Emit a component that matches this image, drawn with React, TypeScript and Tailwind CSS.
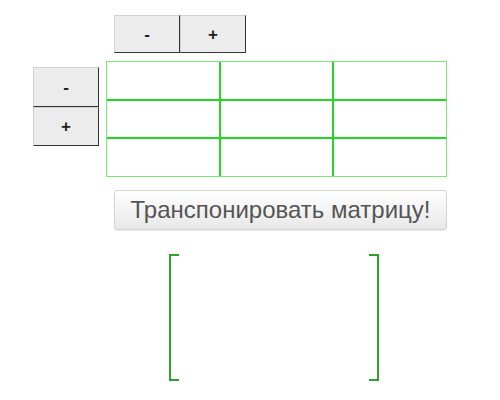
import React from "react";

const btn =
  "w-[66px] h-[38px] bg-[#ececec] border border-t-[#d0d0d0] border-l-[#d0d0d0] border-r-[#333] border-b-[#333] text-[#222] font-bold text-[17px] flex items-center justify-center leading-none";

const cellCls = (r: number, c: number) => {
  const parts = ["w-[113px] h-[38px] p-0 border-[#22d822]"];
  if (c > 0) parts.push("border-l");
  if (c < 2) parts.push("border-r");
  if (r > 0) parts.push("border-t");
  if (r < 2) parts.push("border-b");
  return parts.join(" ");
};

export default function App() {
  const rows = [0, 1, 2];
  const cols = [0, 1, 2];
  return (
    <div className="w-[500px] h-[400px] bg-white overflow-hidden" style={{ fontFamily: '"Liberation Sans", Arial, sans-serif' }}>
      <div className="flex ml-[114px] pt-[15px]">
        <button className={btn}>-</button>
        <button className={btn}>+</button>
      </div>

      <div className="flex items-start mt-[8px] ml-[33px] gap-[7px]">
        <div className="flex flex-col mt-[6px]">
          <button className={btn + " h-[40px]"}>-</button>
          <button className={btn + " h-[39px]"}>+</button>
        </div>
        <table className="border border-[#7be87b] border-separate border-spacing-0">
          <tbody>
            {rows.map((r) => (
              <tr key={r}>
                {cols.map((c) => (
                  <td key={c} className={cellCls(r, c)} />
                ))}
              </tr>
            ))}
          </tbody>
        </table>
      </div>

      <button className="ml-[114px] mt-[13px] w-[333px] h-[40px] rounded-[3px] border border-[#d4d4d4] bg-gradient-to-b from-white to-[#e8e8e8] text-[#555] text-[24px] flex items-center justify-center shadow-[0_1px_1px_rgba(0,0,0,0.08)]">
        Транспонировать матрицу!
      </button>

      <div className="flex ml-[169px] mt-[24px]">
        <div className="w-[10px] h-[127px] border-l-2 border-t-2 border-b-2 border-[#2aa52a]" />
        <div className="w-[190px]" />
        <div className="w-[10px] h-[127px] border-r-2 border-t-2 border-b-2 border-[#2aa52a]" />
      </div>
    </div>
  );
}
